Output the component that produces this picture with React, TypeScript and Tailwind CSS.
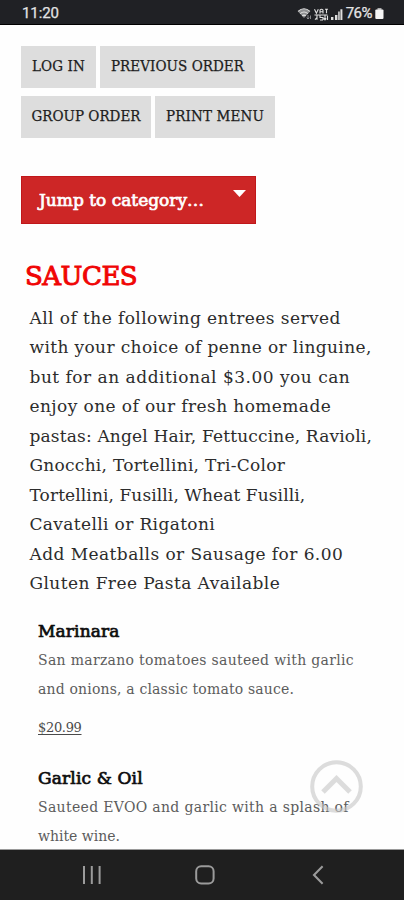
const actions = [
  [
    { label: "LOG IN", className: "w-[75px] tracking-[0.13px]" },
    { label: "PREVIOUS ORDER", className: "w-[155px] tracking-[0.06px]" },
  ],
  [
    { label: "GROUP ORDER", className: "w-[130px] tracking-[0.02px]" },
    { label: "PRINT MENU", className: "w-[120px] tracking-[0.15px]" },
  ],
];

const intro = [
  { text: "All of the following entrees served", className: "tracking-[0.43px]" },
  { text: "with your choice of penne or linguine,", className: "tracking-[0.37px]" },
  { text: "but for an additional $3.00 you can", className: "tracking-[0.5px]" },
  { text: "enjoy one of our fresh homemade", className: "tracking-[0.41px]" },
  { text: "pastas: Angel Hair, Fettuccine, Ravioli,", className: "tracking-[0.17px]" },
  { text: "Gnocchi, Tortellini, Tri-Color", className: "tracking-[0.27px]" },
  { text: "Tortellini, Fusilli, Wheat Fusilli,", className: "tracking-[0.1px]" },
  { text: "Cavatelli or Rigatoni", className: "tracking-[0.36px]" },
  { text: "Add Meatballs or Sausage for 6.00", className: "tracking-[0.43px]" },
  { text: "Gluten Free Pasta Available", className: "tracking-[0.42px]" },
];

const dishes = [
  {
    name: "Marinara",
    lines: [
      { text: "San marzano tomatoes sauteed with garlic", className: "tracking-[0.31px]" },
      { text: "and onions, a classic tomato sauce.", className: "tracking-[0.17px]" },
    ],
    price: "$20.99",
  },
  {
    name: "Garlic & Oil",
    lines: [
      { text: "Sauteed EVOO and garlic with a splash of", className: "tracking-[0.33px]" },
      { text: "white wine.", className: "tracking-normal" },
    ],
  },
];

const StatusBar = () => (
  <header className="flex h-[25px] shrink-0 items-center justify-between border-b border-black bg-[#202125] pl-[22px] pr-[20px] pt-[3px] font-['Roboto',sans-serif] text-[15px] leading-none text-[#e4e4e4] [-webkit-text-stroke:0.25px_#e4e4e4]">
    <span className="tracking-[-0.1px]">11:20</span>
    <div className="flex items-center">
      <svg width="48" height="14" viewBox="0 0 48 14" fill="none">
        <path d="M1 4.4Q7 -0.4 13 4.4L7 11Z" fill="#8e8f91" />
        <path d="M1 4.3Q7 -0.7 13 4.3M3.2 6.6Q7 3.4 10.8 6.6M5.2 8.8Q7 7.4 8.8 8.8" stroke="#e2e2e2" strokeWidth="1.1" />
        <path d="M11 8v4M9.8 10.5l1.2 1.5 1.2-1.5M13.5 12V8.5" stroke="#a0a0a2" strokeWidth="0.8" />
        <path
          d="M17.5 2.2l1.9 4 1.9-4M23 6.4V3.2q1.5-2 3 0v3.2M23 4.8h3M28 2.2h3M29.5 2v4.3M17.5 8h13M20 8v4.7M18 12.6l2-2M23 8v2.5h3V13M23 13h3M28 8.6v4.2M26.8 11.4l1.2 1.4 1.2-1.4M30.5 13V8.8"
          stroke="#dedede"
          strokeWidth="1.1"
        />
        <path d="M34 13v-3h2.4v3zM38 13V8h2.4v5z" fill="#dedede" />
        <path d="M41.2 13V4.6h1.5V13zM43.4 13V2.2h2V13z" fill="#dedede" />
      </svg>
      <span className="ml-[1px] tracking-[-0.5px]">76%</span>
      <svg className="ml-[3px]" width="9" height="13" viewBox="0 0 9 13" fill="#f5f5f5">
        <path d="M2.5 1h4v2h-4z" fill="#aaaaac" />
        <rect x="0.3" y="2.6" width="8.2" height="9.4" rx="1" />
      </svg>
    </div>
  </header>
);

const NavBar = () => (
  <nav className="flex h-[51px] shrink-0 items-center border-t border-[#9a9a9a] bg-[#1f1f1f] pl-[82px] text-[#9b9b9b]">
    <svg width="20" height="20" viewBox="0 0 20 20" fill="none" stroke="currentColor" strokeWidth="2">
      <path d="M2 1v18M9.8 1v18M17.6 1v18" />
    </svg>
    <svg className="ml-[92px]" width="22" height="22" viewBox="0 0 22 22" fill="none" stroke="currentColor" strokeWidth="2">
      <rect x="2.2" y="2.2" width="17.4" height="17.4" rx="5" />
    </svg>
    <svg className="ml-[95px]" width="14" height="20" viewBox="0 0 14 20" fill="none" stroke="currentColor" strokeWidth="2.1">
      <path d="M11.6 1.3L3 10l8.6 8.7" />
    </svg>
  </nav>
);

export default function App() {
  return (
    <div className="relative flex h-[900px] w-[404px] flex-col overflow-hidden bg-[#fefefe] font-['DejaVu_Serif',serif] text-[#2c2c2c]">
      <StatusBar />
      <main className="min-h-0 flex-1 overflow-hidden pl-[21px] pt-[21px]">
        <div className="flex flex-col gap-2">
          {actions.map((row) => (
            <div key={row[0].label} className="flex gap-1">
              {row.map((action) => (
                <button
                  key={action.label}
                  className={`h-[42px] whitespace-nowrap bg-[#dddddd] pb-[2px] text-center font-['DejaVu_Serif_Condensed','DejaVu_Serif',serif] text-[15px] text-[#1c1c1c] [-webkit-text-stroke:0.25px_#1c1c1c] ${action.className}`}
                >
                  {action.label}
                </button>
              ))}
            </div>
          ))}
        </div>

        <button className="mt-[37.5px] flex h-12 w-[235px] justify-between border border-[#c0171a] bg-[#cd2626] pl-[17px] pr-[9px] text-[17px] text-white [-webkit-text-stroke:0.7px_#fff]">
          <span className="whitespace-nowrap leading-[46px]">Jump to category…</span>
          <svg className="mt-[13px]" width="13" height="7" viewBox="0 0 13 7" fill="currentColor">
            <path d="M0 0h13L6.5 7z" />
          </svg>
        </button>

        <h1 className="mt-[36px] pl-[4px] text-[26px] leading-8 tracking-[-0.5px] text-[#f00505] [-webkit-text-stroke:1px_#f00505]">
          SAUCES
        </h1>

        <div className="mt-[12px] pl-[8.5px] text-[17px] leading-[29.55px]">
          {intro.map((line) => (
            <p key={line.text} className={`whitespace-nowrap ${line.className}`}>
              {line.text}
            </p>
          ))}
        </div>

        <div className="mt-[20px] flex flex-col gap-[28px] pl-[17px]">
          {dishes.map((dish) => (
            <section key={dish.name}>
              <h2 className="text-[17px] leading-6 tracking-[0.15px] text-[#0d0d0d] [-webkit-text-stroke:0.7px_#0d0d0d]">
                {dish.name}
              </h2>
              <div className="mt-[3px] text-[14px] leading-[29.3px] text-[#5c5c5c]">
                {dish.lines.map((line) => (
                  <p key={line.text} className={`whitespace-nowrap ${line.className}`}>
                    {line.text}
                  </p>
                ))}
              </div>
              {dish.price && (
                <p className="mt-[13px] text-[13px] leading-5 tracking-[-0.33px] text-[#4a4a4a] underline underline-offset-2">
                  {dish.price}
                </p>
              )}
            </section>
          ))}
        </div>
      </main>
      <NavBar />

      <button aria-label="Back to top" className="absolute left-[309px] top-[760px] text-[#c4c4c4]/60">
        <svg width="54" height="54" viewBox="0 0 54 54" fill="none" stroke="currentColor" strokeWidth="4">
          <circle cx="27.5" cy="26.5" r="24.3" />
          <path d="M14 32L27.5 18.5L41 32" strokeWidth="5" />
        </svg>
      </button>
    </div>
  );
}
